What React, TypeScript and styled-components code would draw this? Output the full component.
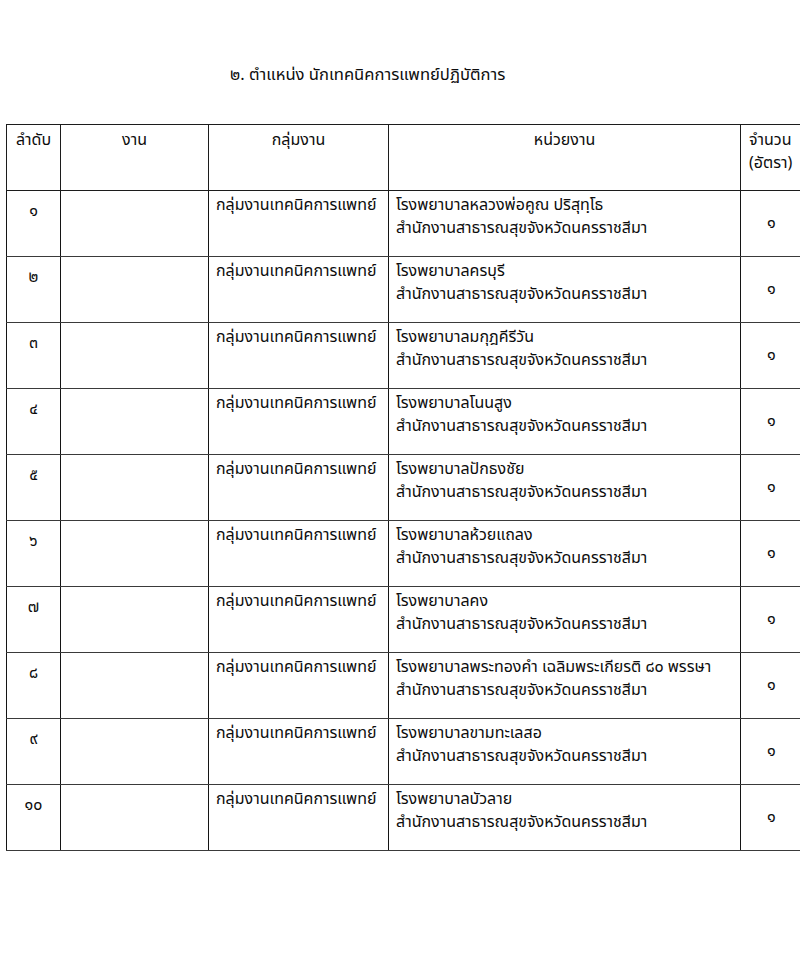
import styled, { createGlobalStyle } from "styled-components";

const GlobalStyle = createGlobalStyle`
  html, body {
    margin: 0;
    padding: 0;
    background: #ffffff;
    overflow: hidden;
  }
  body {
    font-family: "Noto Sans Thai", "Loma", "Garuda", "Norasi", "Liberation Sans", sans-serif;
    color: #0d0d0d;
  }
`;

const Page = styled.div`
  width: 800px;
  height: 959px;
  padding: 61px 0 0 6px;
  box-sizing: border-box;
  overflow: hidden;
`;

const Title = styled.h1`
  margin: 0 0 35px 224px;
  font-size: 16.6px;
  font-weight: normal;
  line-height: 28px;
`;

const Table = styled.table`
  border-collapse: collapse;
  table-layout: fixed;
  width: 820px;
  font-size: 16px;
  line-height: 23px;
`;

const Head = styled.th<{ $align?: string; $indent?: number }>`
  height: 66px;
  box-sizing: border-box;
  padding: 4px 4px 0 ${(p) => p.$indent ?? 4}px;
  vertical-align: top;
  text-align: ${(p) => p.$align || "center"};
  font-weight: normal;
  border: 1px solid #1c1c1c;
`;

const Cell = styled.td<{ $align?: string; $valign?: string; $pad?: number }>`
  height: 66px;
  box-sizing: border-box;
  padding: ${(p) => p.$pad ?? 3}px 7px 0;
  vertical-align: ${(p) => p.$valign || "top"};
  text-align: ${(p) => p.$align || "left"};
  border-left: 1px solid #141414;
  border-right: 1px solid #141414;
  border-top: 1px solid #3a3a3a;
  border-bottom: 1px solid #3a3a3a;
  white-space: nowrap;
`;

const Line = styled.div`
  height: 23px;
`;

const Count = styled.div`
  height: 23px;
  padding-left: 19px;
`;

const hospitals = [
  "โรงพยาบาลหลวงพ่อคูณ ปริสุทฺโธ",
  "โรงพยาบาลครบุรี",
  "โรงพยาบาลมกุฎคีรีวัน",
  "โรงพยาบาลโนนสูง",
  "โรงพยาบาลปักธงชัย",
  "โรงพยาบาลห้วยแถลง",
  "โรงพยาบาลคง",
  "โรงพยาบาลพระทองคำ เฉลิมพระเกียรติ ๘๐ พรรษา",
  "โรงพยาบาลขามทะเลสอ",
  "โรงพยาบาลบัวลาย",
];

const thaiDigits = ["๐", "๑", "๒", "๓", "๔", "๕", "๖", "๗", "๘", "๙"];
const toThai = (n: number) =>
  String(n)
    .split("")
    .map((d) => thaiDigits[Number(d)])
    .join("");

const App = () => {
  return (
    <Page>
      <GlobalStyle />
      <Title>๒. ตำแหน่ง นักเทคนิคการแพทย์ปฏิบัติการ</Title>
      <Table>
        <colgroup>
          <col style={{ width: 54 }} />
          <col style={{ width: 148 }} />
          <col style={{ width: 180 }} />
          <col style={{ width: 352 }} />
          <col style={{ width: 86 }} />
        </colgroup>
        <thead>
          <tr>
            <Head>ลำดับ</Head>
            <Head>งาน</Head>
            <Head>กลุ่มงาน</Head>
            <Head>หน่วยงาน</Head>
            <Head $align="left" $indent={8}>
              จำนวน
              <br />
              (อัตรา)
            </Head>
          </tr>
        </thead>
        <tbody>
          {hospitals.map((h, i) => (
            <tr key={h}>
              <Cell $align="center" $pad={9}>
                {toThai(i + 1)}
              </Cell>
              <Cell />
              <Cell>
                <Line>กลุ่มงานเทคนิคการแพทย์</Line>
              </Cell>
              <Cell>
                <Line>{h}</Line>
                <Line>สำนักงานสาธารณสุขจังหวัดนครราชสีมา</Line>
              </Cell>
              <Cell $valign="middle" $pad={0}>
                <Count>๑</Count>
              </Cell>
            </tr>
          ))}
        </tbody>
      </Table>
    </Page>
  );
};

export default App;
